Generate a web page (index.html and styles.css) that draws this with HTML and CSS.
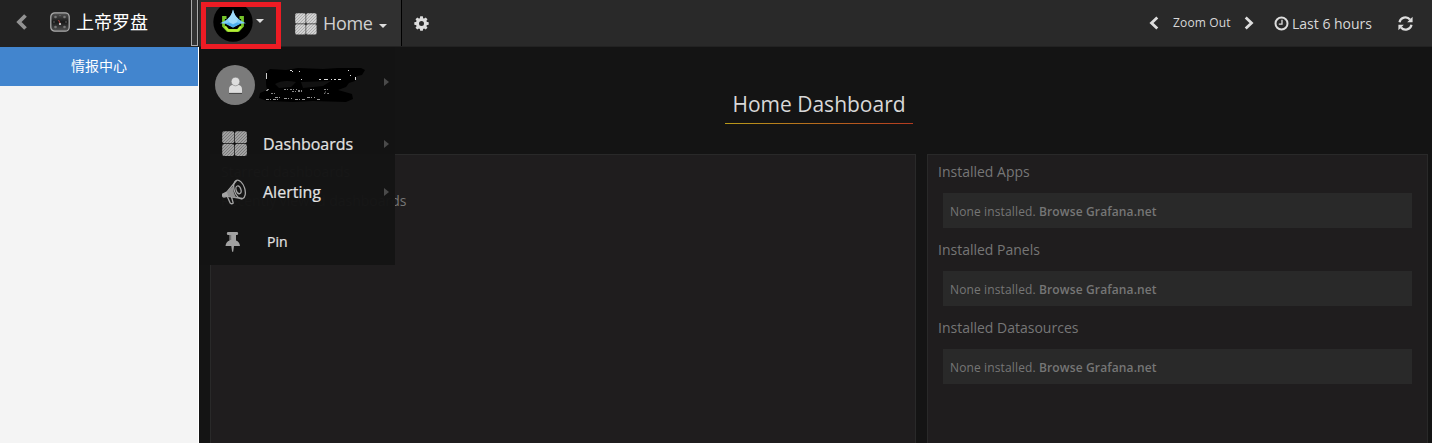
FILE: index.html
```html
<!DOCTYPE html>
<html lang="zh">
<head>
<meta charset="utf-8">
<title>Home Dashboard</title>
<link rel="stylesheet" href="styles.css">
</head>
<body>
<svg class="defs" width="0" height="0">
  <defs>
    <pattern id="hatch" width="3" height="3" patternUnits="userSpaceOnUse">
      <rect width="3" height="3" fill="#a2a2a2"/>
      <path d="M-1 1L1-1M0 3L3 0M2 4L4 2" stroke="#707070" stroke-width=".8"/>
    </pattern>
    <pattern id="hatch-light" width="3" height="3" patternUnits="userSpaceOnUse">
      <rect width="3" height="3" fill="#d2d2d2"/>
      <path d="M-1 1L1-1M0 3L3 0M2 4L4 2" stroke="#a2a2a2" stroke-width=".8"/>
    </pattern>
  </defs>
</svg>
<div class="app">
  <aside class="sidebar">
    <header class="brand">
      <svg class="back" width="12" height="16" viewBox="0 0 12 16"><path d="M10.500 1.500L4 8l6.500 6.500" fill="none" stroke="#929292" stroke-width="3.800"/></svg>
      <svg class="gauge" width="20" height="20" viewBox="0 0 20 20">
        <defs><linearGradient id="dial" x2="0" y2="1"><stop stop-color="#555"/><stop offset=".5" stop-color="#181818"/><stop offset="1" stop-color="#555"/></linearGradient></defs>
        <rect x=".8" y=".8" width="18.400" height="18.400" rx="4" fill="url(#dial)" stroke="#aaa" stroke-width="1.300"/>
        <g fill="#777"><circle cx="5.500" cy="5" r="1.300"/><circle cx="14.500" cy="5" r="1.300"/><circle cx="10" cy="3.600" r=".7"/><circle cx="4" cy="10" r=".7"/><circle cx="16" cy="10" r=".7"/><circle cx="5.500" cy="15" r="1.300"/><circle cx="14.500" cy="15" r="1.300"/></g>
        <path d="M8.500 8L10 11" stroke="#b44" stroke-width=".9"/><circle cx="10" cy="12" r="1.100" fill="#ddd"/>
      </svg>
      <span class="brand-name">上帝罗盘</span>
      <span class="handle"></span>
    </header>
    <a class="side-link">情报中心</a>
  </aside>

  <main class="main">
    <nav class="navbar">
      <div class="logo-cell">
        <svg width="40" height="42" viewBox="0 0 40 42">
          <circle cx="20" cy="22" r="19.700" fill="#000"/>
          <path d="M13.500 17.500H10.500V26L14.500 30.300H25.500L29.500 26V17.500H26.500" fill="none" stroke="#76c52a" stroke-width="2.800"/>
          <path d="M12 26.500L15.500 30.500H24.500L28 26.500" fill="none" stroke="#b5ee35" stroke-width="2.300"/>
          <path d="M20 9.500Q21 15 25 18.500Q28 21.500 33 23.300L27 23.800L20 27.500L13 23.800L7 23.300Q12 21.500 15 18.500Q19 15 20 9.500Z" fill="#7dcdf8"/>
          <path d="M20 9.500Q21 15 25 18.500L24 22L20 24L16 22L15 18.500Q19 15 20 9.500Z" fill="#a0dcfb"/>
          <path d="M12 23.500L16 22.500L20 24.500L24 22.500L28 23.500L20 27.500Z" fill="#4fb0ef"/>
        </svg>
        <i class="caret"></i>
      </div>
      <div class="home-cell">
        <svg width="22" height="22" viewBox="0 0 22 22"><g fill="url(#hatch-light)"><rect x=".2" y=".2" width="10.400" height="10.400" rx="1.500"/><rect x="11.200" y=".2" width="10.400" height="10.400" rx="1.500"/><rect x=".2" y="11.200" width="10.400" height="10.400" rx="1.500"/><rect x="11.200" y="11.200" width="10.400" height="10.400" rx="1.500"/></g></svg>
        <span class="home-text">Home</span><i class="caret"></i>
      </div>
      <svg class="cog" width="15" height="15" viewBox="0 0 15 15"><g fill="#ddd"><path fill-rule="evenodd" d="M7.500 2a5.500 5.500 0 1 0 0 11a5.500 5.500 0 0 0 0-11zM7.500 5a2.500 2.500 0 1 1 0 5a2.500 2.500 0 0 1 0-5z"/><path d="M6.200.3h2.600l.5 2.700H5.700zM5.700 12h3.600l-.5 2.700H6.200zM.3 6.200L3 5.700v3.600L.3 8.800zM12 5.700l2.700.5v2.600l-2.700.5zM1.500 3.300l1.800-1.800 2.200 1.600-2.400 2.400zM9.500 3.100l2.200-1.600 1.800 1.800-1.600 2.200zM3.100 9.500l2.400 2.400-2.200 1.600-1.800-1.800zM11.900 9.500l1.600 2.200-1.800 1.800-2.200-1.600z"/></g></svg>
      <div class="time-nav">
        <svg width="10" height="14" viewBox="0 0 10 14"><path d="M8.300 1.500L2.500 7l5.800 5.500" fill="none" stroke="#ddd" stroke-width="2.800"/></svg>
        <span class="zoom-out">Zoom Out</span>
        <svg width="10" height="14" viewBox="0 0 10 14"><path d="M1.700 1.500L7.500 7l-5.800 5.500" fill="none" stroke="#ddd" stroke-width="2.800"/></svg>
        <svg class="clock" width="15" height="15" viewBox="0 0 15 15"><circle cx="7.500" cy="7.500" r="6" fill="none" stroke="#ddd" stroke-width="2"/><path d="M8 3.800V8.200H4.800" fill="none" stroke="#ddd" stroke-width="1.300"/></svg>
        <span class="range">Last 6 hours</span>
        <svg class="refresh" width="15" height="15" viewBox="0 0 15 15"><path d="M1.500 6.200A6 5.800 0 0 1 12 3.500M13.500 8.800A6 5.800 0 0 1 3 11.500" fill="none" stroke="#ddd" stroke-width="2.200"/><path d="M14.600.8V6.200H9.200zM.4 14.200V8.800H5.800z" fill="#ddd"/></svg>
      </div>
    </nav>

    <div class="title-row"><h1 class="title">Home Dashboard</h1></div>

    <div class="panels">
      <section class="panel lists">
        <h2 class="list-title">Starred dashboards</h2>
        <h2 class="list-title">Recently viewed dashboards</h2>
      </section>
      <section class="panel plugins">
        <h2 class="plugin-title">Installed Apps</h2>
        <p class="plugin-empty">None installed. <b>Browse Grafana.net</b></p>
        <h2 class="plugin-title">Installed Panels</h2>
        <p class="plugin-empty">None installed. <b>Browse Grafana.net</b></p>
        <h2 class="plugin-title">Installed Datasources</h2>
        <p class="plugin-empty">None installed. <b>Browse Grafana.net</b></p>
      </section>
    </div>

    <div class="menu">
      <div class="menu-row user">
        <svg width="40" height="40" viewBox="0 0 40 40"><circle cx="20" cy="20" r="20" fill="#7b7b7b"/><path d="M14 28v-3.500q0-4.500 4-4.500h5q4 0 4 4.500V28z" fill="#ddd"/><circle cx="20.500" cy="16.500" r="4.300" fill="#ddd" stroke="#7b7b7b" stroke-width=".6"/><path d="M14 28.400h13" stroke="#444"/></svg>
        <svg class="redacted" width="108" height="36" viewBox="0 0 108 36">
          <path d="M8 5L12 2L28 3L40 1L65 2L80 1L103 1L107 3L104 8L99 9L97 14L91 16L88 20L80 23L94 27L95 32L88 35L55 34L35 35L9 34L1 31L2 26L9 23L8 17Z" fill="#000"/>
          <path d="M17 17q8-5 21-2l-5 5-12 1zM43 15l30-1-8 5-20 2z" fill="#111"/>
          <path d="M8.500 6v6" stroke="#ccc"/>
          <path d="M32 3.500h2M34 4.500h1M41 4.500h1M43 12.500h1M61 12.500h2M66 12.500h4M73 12.500h1M76 12.500h2M80 12.500h3M90 3.500h1M92 8.500h1M97.500 10v3" stroke="#ddd"/>
          <path d="M8 23.500h3M9 22.500h2M26 22.500h13M40 23.500h4M52 22.500h5M34 24.500h10M66 22.500h4M68 24.500l-2 2h5M13 26.500h5" fill="none" stroke="#888" stroke-dasharray="2 1 1 2"/>
          <path d="M8 32.500h14M17 30.500h7M26 31.500h8M37 32.500h10M49 30.500h8M59 32.500h3" stroke="#999" stroke-dasharray="3 1 1 2"/>
        </svg>
        <i class="arrow"></i>
      </div>
      <div class="menu-row dashboards">
        <svg class="icon" width="26" height="26" viewBox="0 0 26 26"><g fill="url(#hatch)"><rect x=".2" y=".2" width="12" height="12" rx="2"/><rect x="12.900" y=".2" width="12" height="12" rx="2"/><rect x=".2" y="12.900" width="12" height="12" rx="2"/><rect x="12.900" y="12.900" width="12" height="12" rx="2"/></g></svg>
        <span class="label">Dashboards</span><i class="arrow"></i>
      </div>
      <div class="menu-row alerting">
        <svg class="icon" width="26" height="26" viewBox="0 0 26 26" fill="none" stroke="#a5a5a5" stroke-width="1.300"><ellipse cx="17.500" cy="10.500" rx="5.300" ry="9.600" transform="rotate(-18 17.500 10.500)"/><ellipse cx="16.500" cy="10.800" rx="2.400" ry="4" transform="rotate(-18 16.500 10.800)"/><path d="M14.500 1.500L5 13M4.500 17L20 19.500"/><path d="M5.200 12.600L11 7.500Q11 13.500 14 18.700L4.500 17Z" fill="#8f8f8f" stroke="none"/><path d="M4.500 13.300l1 4-3.400.8q-2-.7-1.600-2.800z" fill="#a5a5a5"/><path d="M5.500 18l2.700 6q1.500 1.500 3 0l-1.700-6"/></svg>
        <span class="label">Alerting</span><i class="arrow"></i>
      </div>
      <div class="menu-row pin">
        <svg class="icon" width="26" height="20" viewBox="0 0 26 20"><path d="M5.500 0h10q1.500 1.700 0 3H14V8.500q3.500 1.200 4 5.500h-6L11.200 19.800h-1.100L9.300 14H3.500Q4 9.700 7.500 8.500V3H5.500q-1.500-1.300 0-3z" fill="#a2a2a2"/><path d="M8.700 3v5" stroke="#6b6b6b"/></svg>
        <span class="pin-label">Pin</span>
      </div>
    </div>
    <div class="highlight"></div>
  </main>
</div>
</body>
</html>
```
FILE: styles.css
```css
* { box-sizing: border-box; }
body { margin: 0; overflow: hidden; background: #141414; font-family: "Open Sans", "Noto Sans CJK SC", sans-serif; }
h1, h2, p { margin: 0; font-weight: 400; }
svg { display: block; flex: none; }
.defs { position: absolute; }
.app { display: flex; height: 443px; }

.sidebar { width: 199px; flex: none; background: #f4f4f4; border-right: 1px solid #fff; }
.brand { display: flex; align-items: center; width: 199px; height: 47px; padding-left: 15px; background: #222; }
.back { margin-top: -3px; }
.gauge { margin: -3px 6px 0 23px; }
.brand-name { font: 18px/24px "Noto Sans CJK SC", sans-serif; color: #fff; margin-top: -5px; }
.handle { width: 7px; height: 47px; margin: -2px 1px 0 auto; border: 1px solid #aaa; background: #333; }
.side-link { display: block; height: 39px; background: #4285ce; color: #fff; text-align: center; font: 14px/36px "Noto Sans CJK SC", sans-serif; }

.main { position: relative; flex: 1; min-width: 0; display: flex; flex-direction: column; overflow: hidden; }
.navbar { display: flex; height: 47px; flex: none; background: #292929; border-bottom: 1px solid #222; }
.logo-cell { display: flex; width: 80px; height: 46px; padding-left: 14px; background: #303030; }
.logo-cell .caret { margin: 19px 0 0 3px; }
.caret { width: 0; height: 0; border: 4px solid transparent; border-top-color: #ddd; border-bottom: 0; }
.home-cell { display: flex; width: 123px; height: 46px; padding: 13px 0 0 16px; background: #303030; border-right: 1px solid #000; }
.home-text { width: 50px; margin-left: 6px; font-size: 18px; letter-spacing: -.35px; line-height: 20px; color: #d0d0d0; }
.home-cell .caret { margin: 11px 0 0 6px; }
.cog { margin: 16px 0 0 12px; }
.time-nav { display: flex; margin-left: auto; padding: 16px 19px 0 0; color: #d8d8d8; }
.zoom-out { width: 58px; margin: 0 13px 0 14px; font-size: 12px; letter-spacing: .15px; line-height: 14px; white-space: nowrap; }
.clock { margin-left: 20px; }
.range { width: 81px; margin-left: 3px; font-size: 14px; line-height: 16px; white-space: nowrap; }
.refresh { margin-left: 25px; }

.title-row { display: flex; justify-content: center; height: 107px; flex: none; padding: 42px 0 0 7px; }
.title { width: 188px; height: 35px; text-align: center; white-space: nowrap; font-size: 21px; line-height: 31px; color: #d8d8d8; border-bottom: 1px solid; border-image: linear-gradient(90deg, #b89a1a, #b43a20) 1; }
.panels { display: flex; gap: 11px; flex: 1; margin: 0 4px 0 11px; }
.panel { border: 1px solid #292929; border-bottom: 0; background: #1f1d1e; color: #767676; }
.lists { width: 706px; padding: 3px 10px; }
.list-title { height: 29px; font-size: 14px; line-height: 28px; }
.plugins { flex: 1; padding: 4px 15px 0 10px; }
.plugin-title { height: 34px; font-size: 14px; line-height: 25px; }
.plugin-empty { height: 35px; margin: 0 0 9px 5px; padding-left: 7px; background: #292929; font-size: 12px; letter-spacing: .13px; line-height: 37px; }
.plugin-empty b { font-weight: 600; }

.menu { position: absolute; left: 0; top: 47px; width: 196px; height: 218px; background: rgba(20, 20, 20, .97); }
.menu-row { display: flex; align-items: center; }
.user { height: 76px; padding-left: 16px; }
.redacted { margin-left: 3px; }
.dashboards { height: 42px; padding-left: 23px; }
.alerting { height: 54px; padding-left: 23px; }
.pin { height: 46px; padding-left: 23px; }
.label { margin-left: 15px; font-size: 16px; line-height: 24px; color: #e3e3e3; -webkit-text-stroke: .2px #e3e3e3; }
.arrow { width: 0; height: 0; border: 4px solid transparent; border-left: 5px solid #4a4a4a; border-right: 0; margin: 0 6px 0 auto; }
.user .arrow { margin-top: -6px; }
.pin-label { margin: -2px 0 0 19px; font-size: 14px; color: #e3e3e3; -webkit-text-stroke: .2px #e3e3e3; }
.highlight { position: absolute; left: 2px; top: 2px; width: 80px; height: 47px; border: 5px solid #ed1c24; }
```
